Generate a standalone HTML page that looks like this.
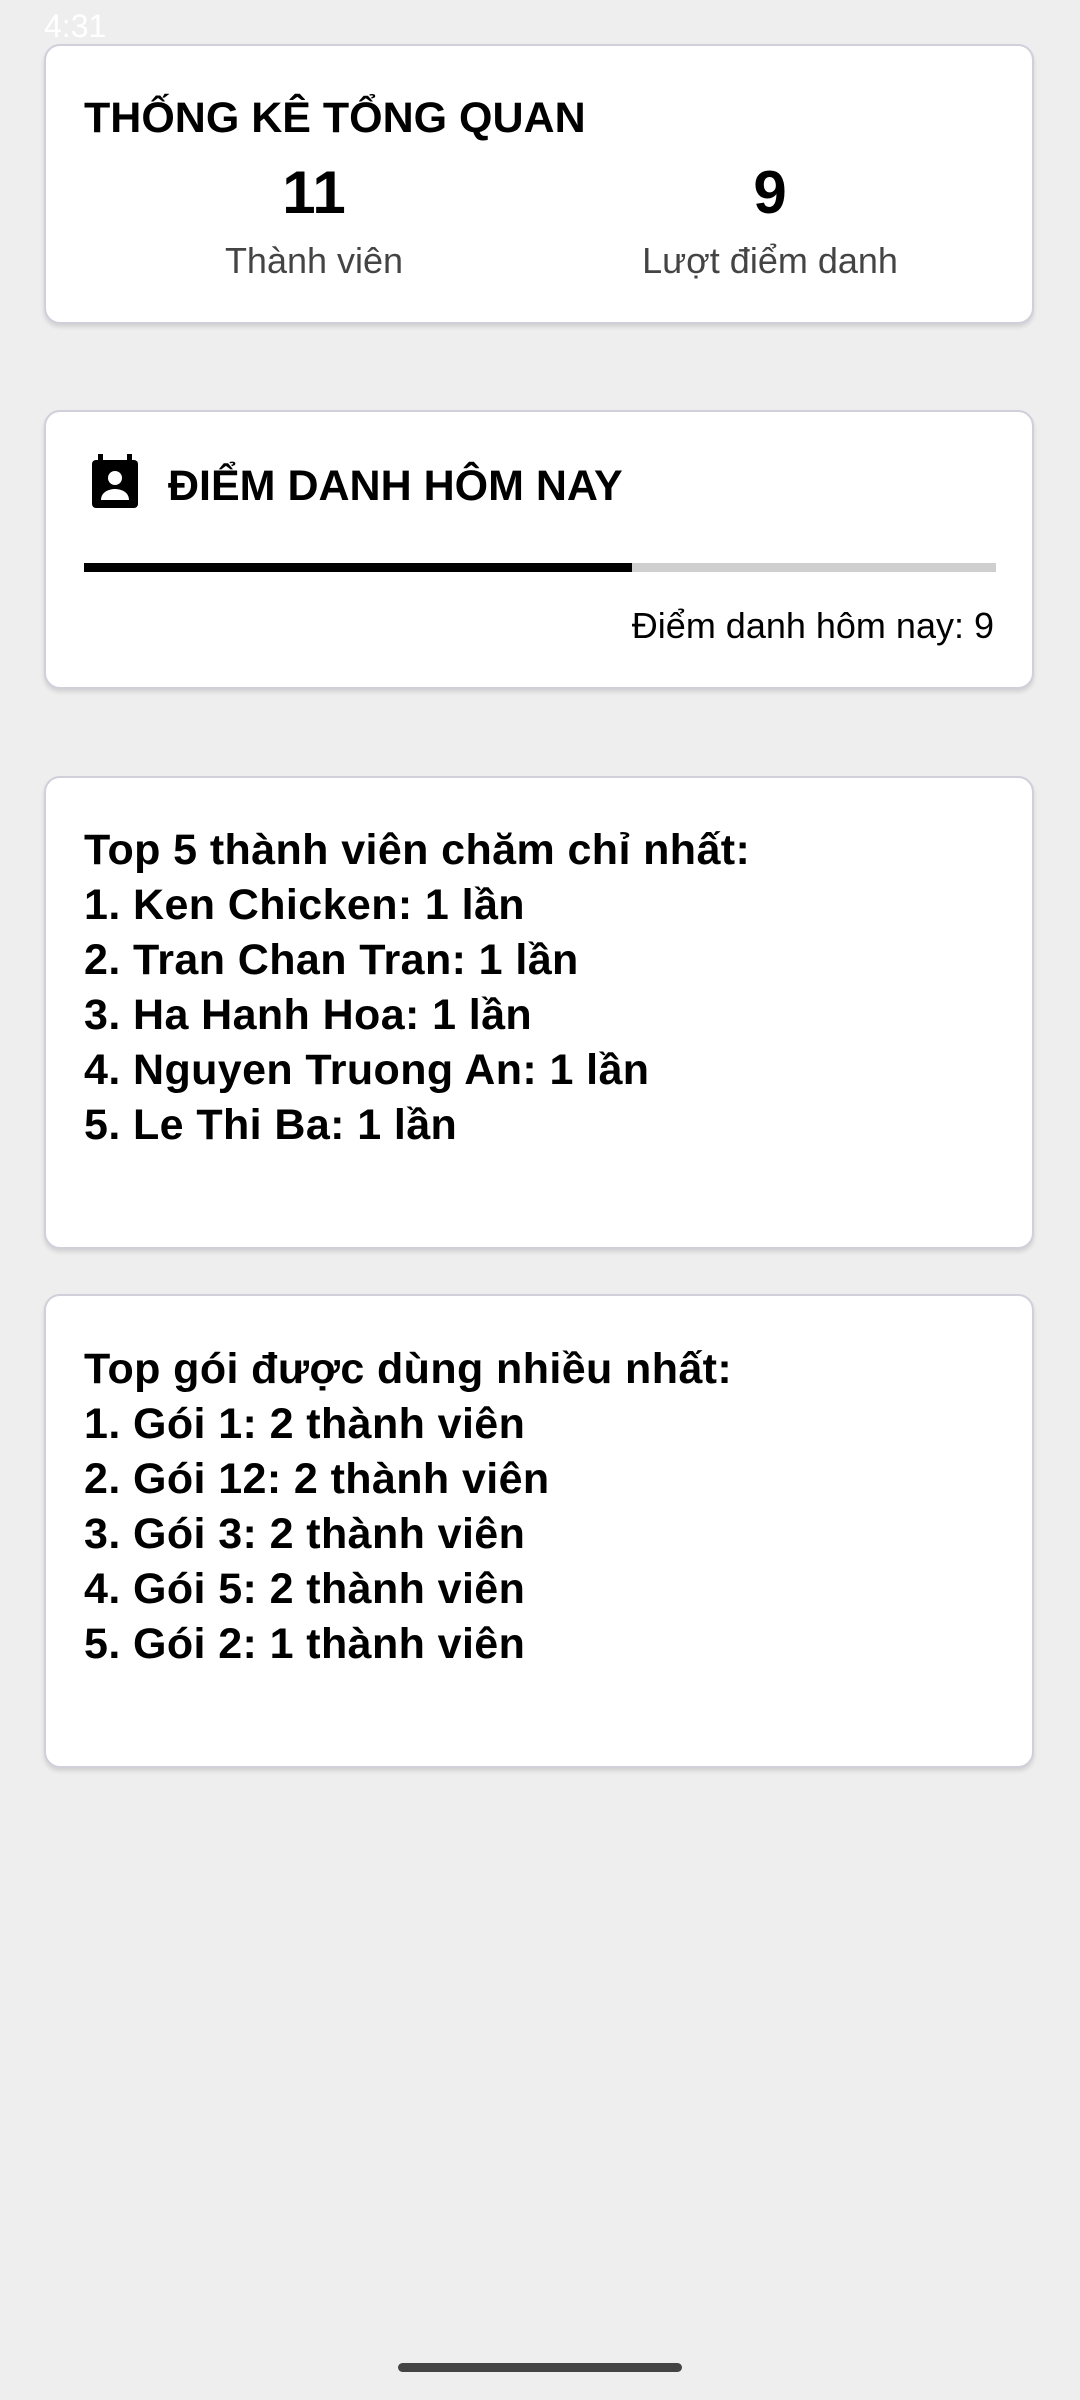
<!DOCTYPE html>
<html><head><meta charset="utf-8"><style>
body{margin:0;width:1080px;height:2400px;background:#eeeeee;font-family:"Liberation Sans",Roboto,sans-serif;position:relative;overflow:hidden;color:#000}
.card{position:absolute;left:44px;width:990px;background:#fff;border:2px solid #d2cfdb;border-radius:16px;box-shadow:0 3px 4px rgba(0,0,0,0.12);box-sizing:border-box}
.abs{position:absolute;white-space:nowrap}
.list{position:absolute;left:38px;font-weight:bold;font-size:43px;line-height:55px;letter-spacing:0.4px}
</style></head><body>
<div class="abs" style="left:44px;top:8px;color:#fff;font-size:32px">4:31</div>
<div class="card" style="top:44px;height:280px">
 <div class="abs" style="left:38px;top:48px;font-size:43px;font-weight:bold">THỐNG KÊ TỔNG QUAN</div>
 <div class="abs" style="left:168px;width:200px;text-align:center;top:112px;font-size:60px;font-weight:bold">11</div>
 <div class="abs" style="left:143px;width:250px;text-align:center;top:194px;font-size:36px;color:#444">Thành viên</div>
 <div class="abs" style="left:574px;width:300px;text-align:center;top:112px;font-size:60px;font-weight:bold">9</div>
 <div class="abs" style="left:549px;width:350px;text-align:center;top:194px;font-size:36px;color:#444">Lượt điểm danh</div>
</div>
<div class="card" style="top:410px;height:279px">
 <svg class="abs" style="left:44px;top:42px" width="54" height="56" viewBox="0 0 54 56">
  <rect x="8" y="0" width="5" height="10" fill="#000"/><rect x="37" y="0" width="5" height="10" fill="#000"/>
  <rect x="2" y="6" width="46" height="48" rx="4" fill="#000"/>
  <circle cx="25" cy="24" r="7" fill="#fff"/>
  <path d="M11 46c0-8 8-11 14-11s14 3 14 11z" fill="#fff"/>
 </svg>
 <div class="abs" style="left:122px;top:50px;font-size:43px;font-weight:bold">ĐIỂM DANH HÔM NAY</div>
 <div class="abs" style="left:38px;top:151px;width:912px;height:9px;background:#cfcfcf"></div>
 <div class="abs" style="left:38px;top:151px;width:548px;height:9px;background:#000"></div>
 <div class="abs" style="right:38px;top:193px;font-size:36px">Điểm danh hôm nay: 9</div>
</div>
<div class="card" style="top:776px;height:473px">
 <div class="list" style="top:45px">Top 5 thành viên chăm chỉ nhất:<br>1. Ken Chicken: 1 lần<br>2. Tran Chan Tran: 1 lần<br>3. Ha Hanh Hoa: 1 lần<br>4. Nguyen Truong An: 1 lần<br>5. Le Thi Ba: 1 lần</div>
</div>
<div class="card" style="top:1294px;height:474px">
 <div class="list" style="top:46px">Top gói được dùng nhiều nhất:<br>1. Gói 1: 2 thành viên<br>2. Gói 12: 2 thành viên<br>3. Gói 3: 2 thành viên<br>4. Gói 5: 2 thành viên<br>5. Gói 2: 1 thành viên</div>
</div>
<div class="abs" style="left:398px;top:2363px;width:284px;height:9px;border-radius:5px;background:#444"></div>
</body></html>
